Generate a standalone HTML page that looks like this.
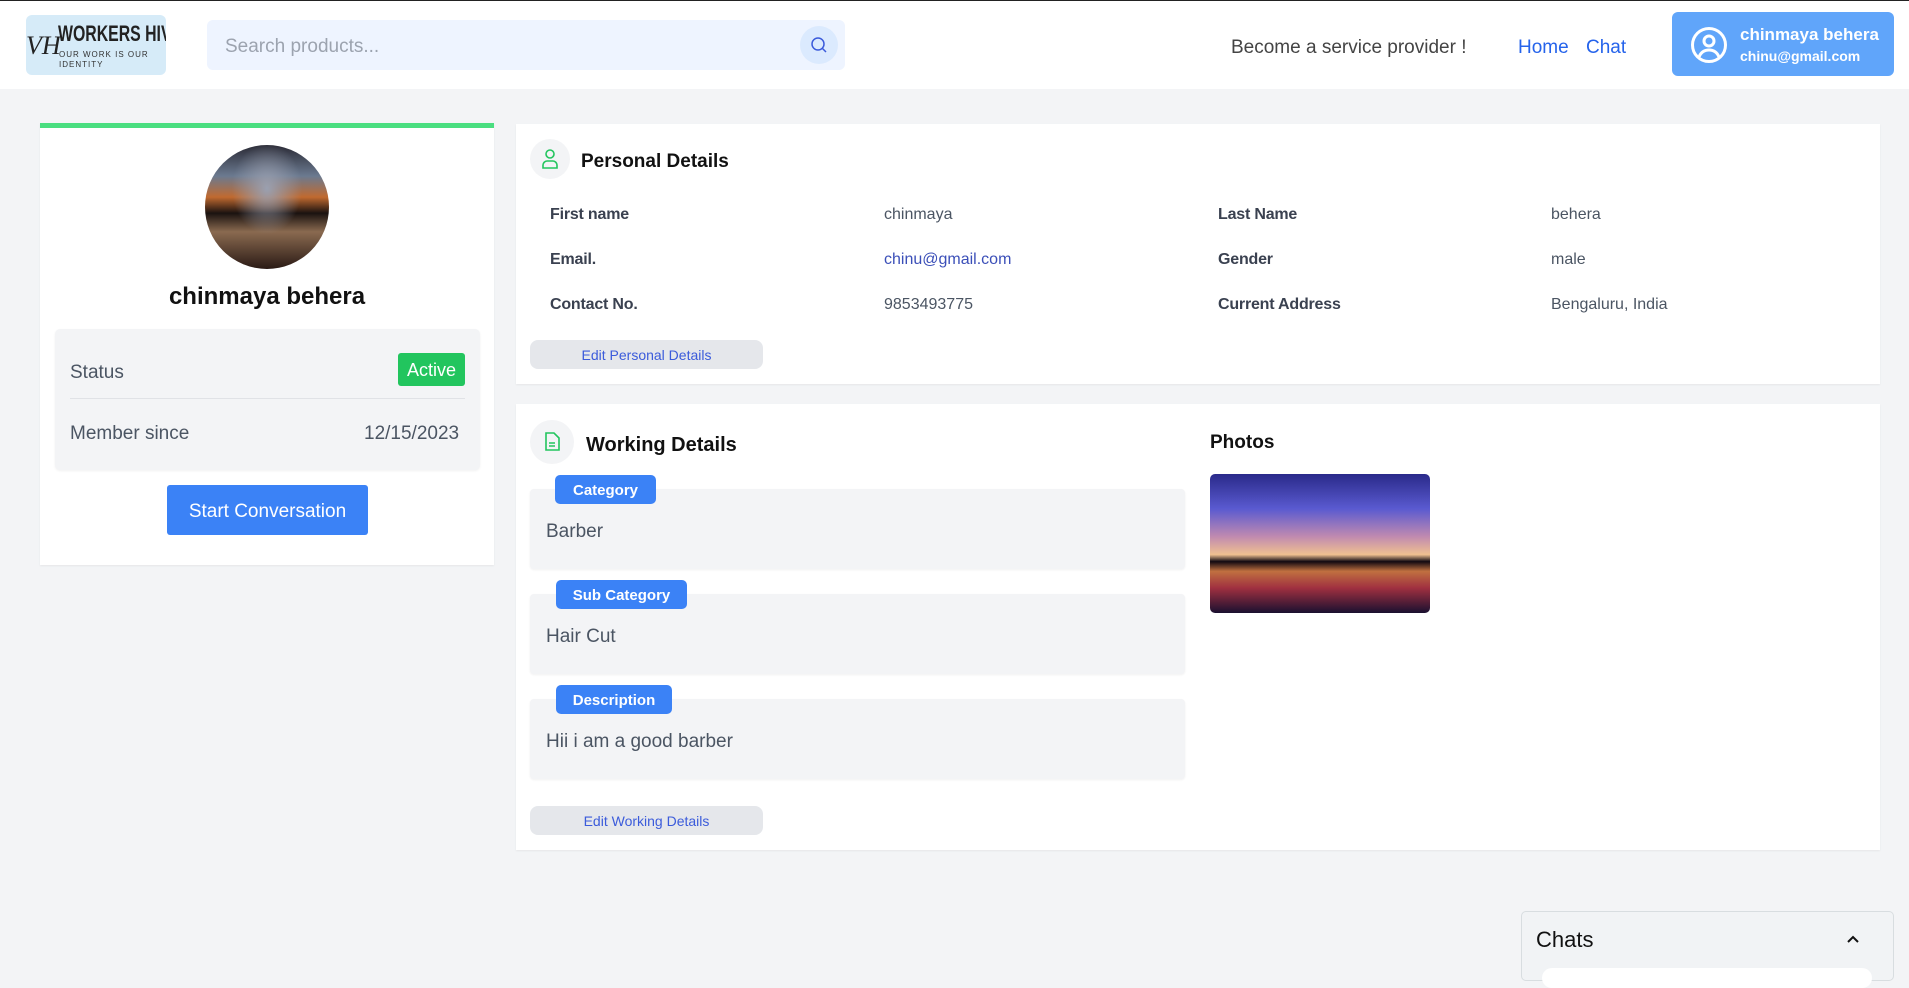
<!DOCTYPE html>
<html><head><meta charset="utf-8"><style>
*{box-sizing:border-box;margin:0;padding:0}
body{width:1909px;height:973px;overflow:hidden;background:#f3f4f6;font-family:"Liberation Sans",sans-serif;position:relative;color:#1f2937;line-height:1.7}
.a{position:absolute}
.nav{left:0;top:0;width:1909px;height:89px;background:#fff;border-top:1px solid #222}
.card{background:#fff;box-shadow:0 1px 2px rgba(0,0,0,.06)}
.lbl{font-size:16px;font-weight:bold;color:#3a4150;letter-spacing:-.2px}
.val{font-size:16px;color:#4b5563}
.badge{background:#3b82f6;color:#fff;font-size:15px;font-weight:bold;border-radius:5px;text-align:center;line-height:29px;height:29px}
.box{background:#f3f4f6;border-radius:4px;left:530px;width:655px;height:80px;box-shadow:0 1px 2px rgba(0,0,0,.06)}
.ftxt{font-size:19px;color:#4b5563;left:546px}
.ebtn{background:#e5e7eb;border-radius:8px;color:#3b5bdb;font-size:14px;text-align:center;line-height:29px;height:29px;width:233px;left:530px}
</style></head><body>
<div class="a nav"></div>
<div class="a" style="left:26px;top:15px;width:140px;height:60px;background:#d6ebf8;border-radius:6px;overflow:hidden;line-height:1.15">
 <div class="a" style="left:0;top:16px;font-family:'Liberation Serif',serif;font-style:italic;font-size:26px;color:#222">VH</div>
 <div class="a" style="left:32px;top:6px;font-size:22px;font-weight:bold;color:#222;transform:scaleX(.72);transform-origin:left;white-space:nowrap">WORKERS HIVE</div>
 <div class="a" style="left:33px;top:35px;font-size:8px;color:#333;letter-spacing:1px;width:100px;line-height:10px">OUR WORK IS OUR IDENTITY</div>
</div>
<div class="a" style="left:207px;top:20px;width:638px;height:50px;background:#eef4ff;border-radius:6px">
 <div class="a" style="left:18px;top:11px;font-size:19px;color:#9ca3af">Search products...</div>
 <div class="a" style="left:593px;top:6px;width:38px;height:38px;border-radius:50%;background:#dbeafe">
  <svg class="a" style="left:10px;top:10px" width="18" height="18" viewBox="0 0 18 18" fill="none" stroke="#3b5bdb" stroke-width="1.5"><circle cx="8" cy="8" r="6"/><path d="M12.5 12.5L16 16"/></svg>
 </div>
</div>
<div class="a" style="left:1231px;top:32px;font-size:19px;color:#444">Become a service provider !</div>
<div class="a" style="left:1518px;top:32px;font-size:19px;color:#2563eb">Home</div>
<div class="a" style="left:1586px;top:32px;font-size:19px;color:#2563eb">Chat</div>
<div class="a" style="left:1672px;top:12px;width:222px;height:64px;background:#60a5fa;border-radius:6px;line-height:1.4">
 <svg class="a" style="left:18px;top:14px" width="38" height="38" viewBox="0 0 38 38" fill="none" stroke="#fff" stroke-width="3"><circle cx="19" cy="19" r="16.5"/><circle cx="19" cy="15" r="5"/><path d="M9 31c2-5 6-7 10-7s8 2 10 7"/></svg>
 <div class="a" style="left:68px;top:11px;font-size:17px;font-weight:bold;color:#fff">chinmaya behera</div>
 <div class="a" style="left:68px;top:35px;font-size:14px;font-weight:bold;color:#fff">chinu@gmail.com</div>
</div>

<div class="a card" style="left:40px;top:123px;width:454px;height:442px;border-top:5px solid #4ade80"></div>
<div class="a" style="left:205px;top:145px;width:124px;height:124px;border-radius:50%;background:radial-gradient(ellipse at 50% 35%,#9aa0b0 0%,transparent 40%),linear-gradient(180deg,#2a2a35 0%,#6b7a90 25%,#c06a30 42%,#1a1210 55%,#8a6a50 70%,#2a1a15 100%)"></div>
<div class="a" style="left:40px;top:277px;width:454px;text-align:center;font-size:24px;font-weight:bold;color:#111">chinmaya behera</div>
<div class="a" style="left:55px;top:329px;width:425px;height:141px;background:#f3f4f6;border-radius:5px;box-shadow:0 1px 2px rgba(0,0,0,.06)"></div>
<div class="a" style="left:70px;top:357px;font-size:19px;color:#4b5563">Status</div>
<div class="a" style="left:398px;top:353px;width:67px;height:33px;background:#22c55e;border-radius:3px;color:#fff;font-size:18px;text-align:center;line-height:35px">Active</div>
<div class="a" style="left:70px;top:398px;width:395px;height:1px;background:#e0e2e6"></div>
<div class="a" style="left:70px;top:418px;font-size:19px;color:#4b5563">Member since</div>
<div class="a" style="left:364px;top:418px;font-size:19px;color:#4b5563">12/15/2023</div>
<div class="a" style="left:167px;top:485px;width:201px;height:50px;background:#3b82f6;border-radius:3px;color:#fff;font-size:19px;text-align:center;line-height:53px">Start Conversation</div>

<div class="a card" style="left:516px;top:124px;width:1364px;height:260px"></div>
<div class="a" style="left:530px;top:139px;width:40px;height:40px;border-radius:50%;background:#f3f4f6">
 <svg class="a" style="left:11px;top:9px" width="18" height="22" viewBox="0 0 18 22" fill="none" stroke="#22c55e" stroke-width="1.6"><circle cx="9" cy="6" r="4"/><path d="M2 20v-3c0-2 2-4 4-4h6c2 0 4 2 4 4v3z"/></svg>
</div>
<div class="a" style="left:581px;top:146px;font-size:19px;font-weight:bold;color:#111">Personal Details</div>
<div class="a lbl" style="left:550px;top:201px">First name</div>
<div class="a val" style="left:884px;top:201px">chinmaya</div>
<div class="a lbl" style="left:1218px;top:201px">Last Name</div>
<div class="a val" style="left:1551px;top:201px">behera</div>
<div class="a lbl" style="left:550px;top:246px">Email.</div>
<div class="a val" style="left:884px;top:246px;color:#3b4fb8">chinu@gmail.com</div>
<div class="a lbl" style="left:1218px;top:246px">Gender</div>
<div class="a val" style="left:1551px;top:246px">male</div>
<div class="a lbl" style="left:550px;top:291px">Contact No.</div>
<div class="a val" style="left:884px;top:291px">9853493775</div>
<div class="a lbl" style="left:1218px;top:291px">Current Address</div>
<div class="a val" style="left:1551px;top:291px">Bengaluru, India</div>
<div class="a ebtn" style="top:340px;line-height:30px">Edit Personal Details</div>

<div class="a card" style="left:516px;top:404px;width:1364px;height:446px"></div>
<div class="a" style="left:530px;top:420px;width:44px;height:44px;border-radius:50%;background:#f3f4f6">
 <svg class="a" style="left:14px;top:12px" width="16" height="20" viewBox="0 0 16 20" fill="none" stroke="#22c55e" stroke-width="1.6"><path d="M2 1h8l5 5v12H2z"/><path d="M5 11h6M5 14h6"/></svg>
</div>
<div class="a" style="left:586px;top:428px;font-size:20px;font-weight:bold;color:#111">Working Details</div>
<div class="a box" style="top:489px"></div>
<div class="a badge" style="left:555px;top:475px;width:101px;line-height:31px">Category</div>
<div class="a ftxt" style="top:516px">Barber</div>
<div class="a box" style="top:594px"></div>
<div class="a badge" style="left:556px;top:580px;width:131px;line-height:31px">Sub Category</div>
<div class="a ftxt" style="top:621px">Hair Cut</div>
<div class="a box" style="top:699px"></div>
<div class="a badge" style="left:556px;top:685px;width:116px;line-height:31px">Description</div>
<div class="a ftxt" style="top:726px">Hii i am a good barber</div>
<div class="a ebtn" style="top:806px;line-height:30px">Edit Working Details</div>
<div class="a" style="left:1210px;top:427px;font-size:19px;font-weight:bold;color:#111">Photos</div>
<div class="a" style="left:1210px;top:474px;width:220px;height:139px;border-radius:5px;overflow:hidden;background:linear-gradient(180deg,#2a2a8a 0%,#5a5ad0 25%,#c08ab0 45%,#f0c090 58%,#100810 63%,#c07040 70%,#a03040 82%,#1a1030 100%)"></div>

<div class="a" style="left:1521px;top:911px;width:373px;height:70px;background:#f1f3f5;border:1px solid #d8dde0;border-radius:5px">
 <div class="a" style="left:14px;top:9px;font-size:22px;color:#111">Chats</div>
 <svg class="a" style="left:324px;top:22px" width="14" height="10" viewBox="0 0 14 10" fill="none" stroke="#111" stroke-width="2"><path d="M2 8l5-5 5 5"/></svg>
 <div class="a" style="left:20px;top:56px;width:330px;height:20px;background:#fff;border-radius:12px"></div>
</div>
</body></html>
